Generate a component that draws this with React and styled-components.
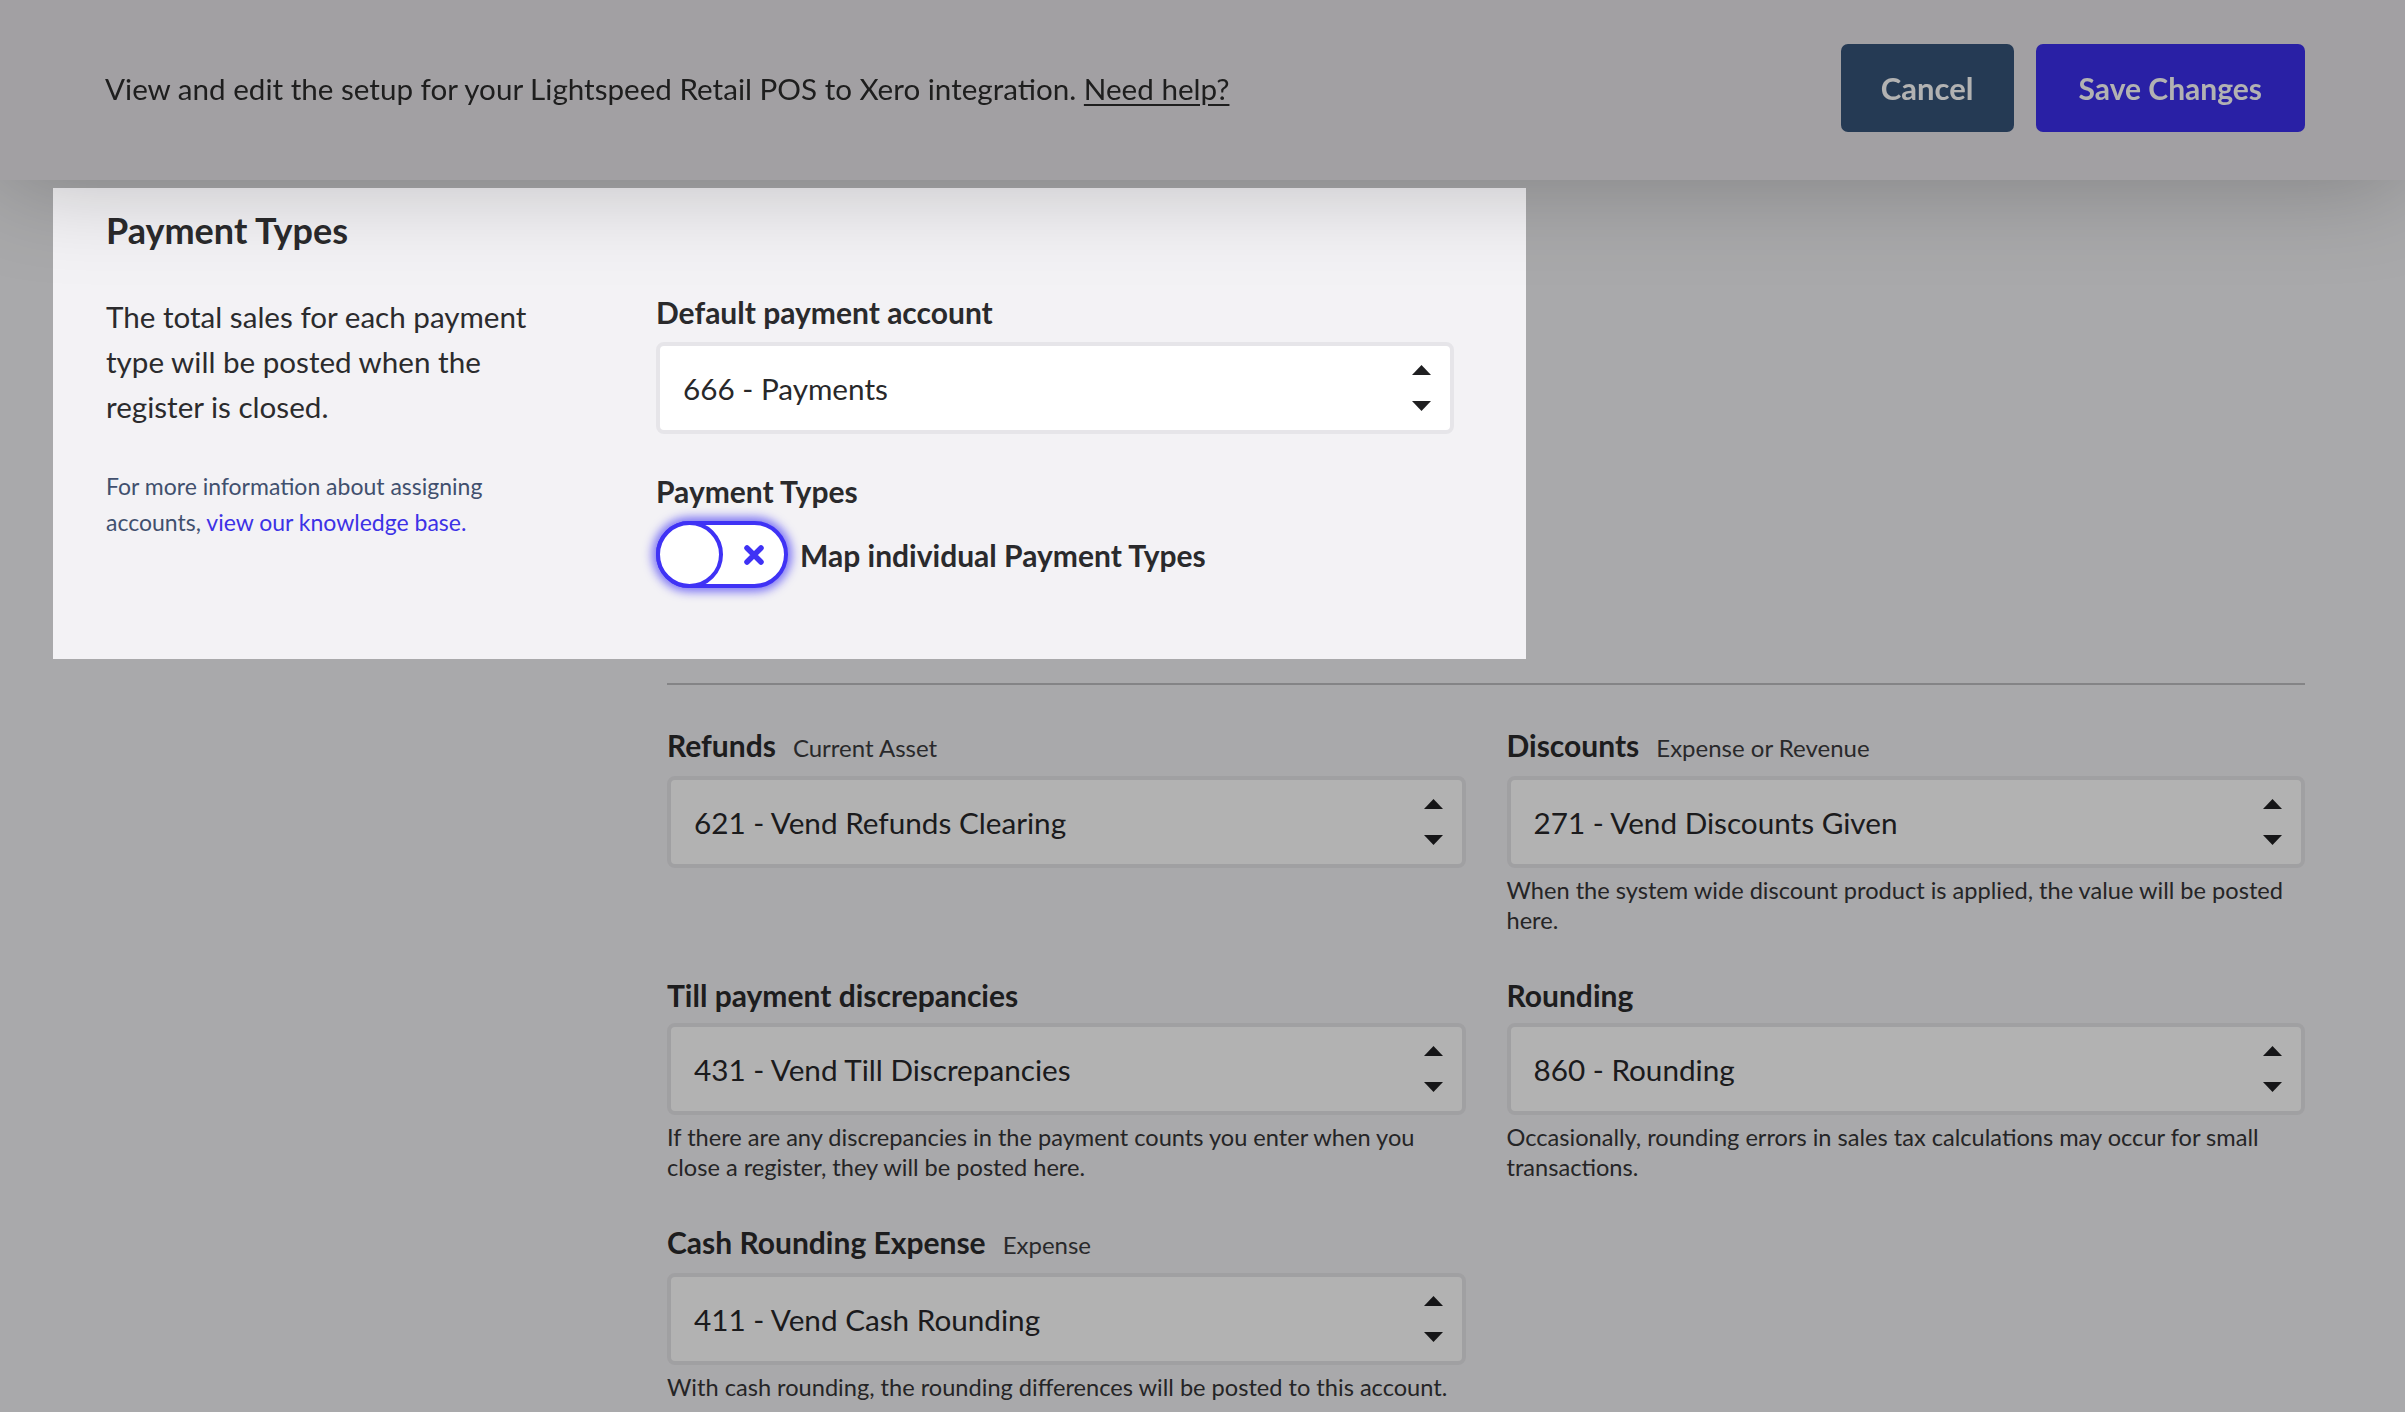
import React, { useState } from 'react';
import styled, { createGlobalStyle } from 'styled-components';

const GlobalStyle = createGlobalStyle`
  html, body {
    margin: 0;
    padding: 0;
    overflow: hidden;
    background: #f3f2f5;
  }
  body {
    font-family: Lato, "Noto Sans", sans-serif;
    color: #2b2b2d;
  }
`;

// Header
const Header = styled.header`
  position: relative;
  z-index: 3;
  height: 180px;
  box-sizing: border-box;
  padding: 0 100px 4px 105px;
  display: flex;
  align-items: center;
  justify-content: space-between;
  background: #e9e6ea;
  box-shadow: 0 0 100px rgba(0, 0, 0, 0.25);

  /* the header sits under the same dimming as the page */
  &::after {
    content: '';
    position: absolute;
    inset: 0;
    background: rgba(0, 0, 0, 0.3);
    pointer-events: none;
  }
`;

const Intro = styled.p`
  margin: 0;
  font-size: 29.6px;
  color: #2c2c2c;
`;

const HelpLink = styled.a`
  color: inherit;
  text-decoration: underline;
  text-underline-offset: 4px;
`;

const Actions = styled.div`
  display: flex;
  gap: 22px;
`;

const ActionButton = styled.button`
  height: 88px;
  padding: 0 ${(p) => (p.$primary ? '43px' : '40px')};
  border: none;
  border-radius: 7px;
  font-family: inherit;
  font-size: ${(p) => (p.$primary ? '30px' : '31px')};
  font-weight: 700;
  color: #fff;
  background: ${(p) => (p.$primary ? '#3b2eed' : '#355379')};
  cursor: pointer;
`;

// Dimmed backdrop behind the highlighted section
const Backdrop = styled.div`
  position: fixed;
  inset: 0;
  z-index: 1;
  background: rgba(0, 0, 0, 0.3);
  pointer-events: none;
`;

// Page
const Main = styled.main`
  padding: 8px 100px 0 53px;
`;

const SpotlightCard = styled.section`
  position: relative;
  z-index: 2;
  width: 1473px;
  height: 471px;
  box-sizing: border-box;
  padding: 21px 72px 0 53px;
  background: #f3f2f5;
`;

const CardTitle = styled.h2`
  margin: 0;
  font-size: 36px;
  font-weight: 700;
  line-height: 43px;
  color: #2a2a2c;
`;

const Columns = styled.div`
  display: flex;
  gap: 90px;
  margin-top: 42px;
`;

const Aside = styled.div`
  width: 460px;
  flex: none;
`;

const Description = styled.p`
  margin: 0;
  font-size: 29.6px;
  line-height: 45px;
  color: #2b2b2d;
`;

const MoreInfo = styled.p`
  margin: 39px 0 0;
  font-size: 23px;
  line-height: 36px;
  color: #41506e;
`;

const KbLink = styled.a`
  color: #3d31e6;
  text-decoration: none;
`;

const FormColumn = styled.div`
  width: 798px;
`;

const LabelRow = styled.div`
  display: flex;
  align-items: baseline;
  gap: 17px;
  margin-top: ${(p) => (p.$spaced ? '39px' : '0')};
  line-height: 36px;
`;

const Label = styled.label`
  font-size: 30px;
  font-weight: 700;
  color: #2a2a2c;
`;

const SubType = styled.span`
  font-size: 24px;
  color: #3c3c3e;
`;

const SelectBox = styled.div`
  margin-top: ${(p) => p.$gap}px;
  height: 92px;
  box-sizing: border-box;
  display: flex;
  align-items: center;
  justify-content: space-between;
  padding: 0 19px 0 23px;
  border: 4px solid #e6e5e9;
  border-radius: 8px;
  background: #fff;
  font-size: 29.7px;
  color: #28282a;
  cursor: pointer;
`;

const ToggleRow = styled.div`
  display: flex;
  align-items: center;
  gap: 12px;
  margin-top: 12px;
`;

const ToggleTrack = styled.button`
  width: 132px;
  height: 67px;
  box-sizing: border-box;
  padding: 0;
  display: flex;
  align-items: center;
  border: 4px solid #3f32f5;
  border-radius: 34px;
  background: #fff;
  box-shadow: 0 0 10px 4px rgba(63, 50, 245, 0.65);
  cursor: pointer;
`;

const ToggleKnob = styled.span`
  width: 67px;
  height: 67px;
  margin: -4px 0 -4px -4px;
  box-sizing: border-box;
  flex: none;
  border: 4px solid #3f32f5;
  border-radius: 50%;
  background: #fff;
`;

const ToggleIcon = styled.span`
  flex: 1;
  display: flex;
  justify-content: center;
  align-items: center;
`;

const ToggleText = styled.span`
  font-size: 30px;
  font-weight: 700;
  color: #2a2a2c;
`;

const Accounts = styled.section`
  margin: 24px 0 0 614px;
  padding-top: 42px;
  border-top: 2px solid #bebdc0;
  display: grid;
  grid-template-columns: 1fr 1fr;
  column-gap: 41px;
  row-gap: 42px;
  align-items: start;
`;

const Help = styled.p`
  margin: 7px 0 0;
  font-size: 23.6px;
  line-height: 30px;
  color: #353537;
`;

const Arrows = () => (
  <svg width="19" height="46" viewBox="0 0 19 46" aria-hidden="true">
    <polygon points="0,10 9.5,0 19,10" fill="#1f1f21" />
    <polygon points="0,36 19,36 9.5,46" fill="#1f1f21" />
  </svg>
);

const CrossIcon = () => (
  <svg width="24" height="24" viewBox="0 0 24 24" aria-hidden="true">
    <path d="M5 5 L19 19 M19 5 L5 19" stroke="#3f32f5" strokeWidth="5.5" strokeLinecap="round" />
  </svg>
);

const AccountSelect = ({ value, gap = 10 }) => (
  <SelectBox $gap={gap}>
    <span>{value}</span>
    <Arrows />
  </SelectBox>
);

const accountFields = [
  { label: 'Refunds', type: 'Current Asset', value: '621 - Vend Refunds Clearing' },
  {
    label: 'Discounts',
    type: 'Expense or Revenue',
    value: '271 - Vend Discounts Given',
    help: 'When the system wide discount product is applied, the value will be posted here.',
  },
  {
    label: 'Till payment discrepancies',
    value: '431 - Vend Till Discrepancies',
    help: 'If there are any discrepancies in the payment counts you enter when you close a register, they will be posted here.',
  },
  {
    label: 'Rounding',
    value: '860 - Rounding',
    help: 'Occasionally, rounding errors in sales tax calculations may occur for small transactions.',
  },
  {
    label: 'Cash Rounding Expense',
    type: 'Expense',
    value: '411 - Vend Cash Rounding',
    help: 'With cash rounding, the rounding differences will be posted to this account.',
  },
];

const App = () => {
  const [mapIndividual, setMapIndividual] = useState(false);

  return (
    <>
      <GlobalStyle />
      <Header>
        <Intro>
          View and edit the setup for your Lightspeed Retail POS to Xero integration.{' '}
          <HelpLink href="#">Need help?</HelpLink>
        </Intro>
        <Actions>
          <ActionButton>Cancel</ActionButton>
          <ActionButton $primary>Save Changes</ActionButton>
        </Actions>
      </Header>

      <Backdrop />

      <Main>
        <SpotlightCard>
          <CardTitle>Payment Types</CardTitle>
          <Columns>
            <Aside>
              <Description>
                The total sales for each payment type will be posted when the register is closed.
              </Description>
              <MoreInfo>
                For more information about assigning accounts,{' '}
                <KbLink href="#">view our knowledge base.</KbLink>
              </MoreInfo>
            </Aside>
            <FormColumn>
              <LabelRow>
                <Label>Default payment account</Label>
              </LabelRow>
              <AccountSelect value="666 - Payments" gap={12} />

              <LabelRow $spaced>
                <Label>Payment Types</Label>
              </LabelRow>
              <ToggleRow>
                <ToggleTrack onClick={() => setMapIndividual(!mapIndividual)} aria-pressed={mapIndividual}>
                  <ToggleKnob />
                  <ToggleIcon>
                    <CrossIcon />
                  </ToggleIcon>
                </ToggleTrack>
                <ToggleText>Map individual Payment Types</ToggleText>
              </ToggleRow>
            </FormColumn>
          </Columns>
        </SpotlightCard>

        <Accounts>
          {accountFields.map((field) => (
            <div key={field.label}>
              <LabelRow>
                <Label>{field.label}</Label>
                {field.type && <SubType>{field.type}</SubType>}
              </LabelRow>
              <AccountSelect value={field.value} />
              {field.help && <Help>{field.help}</Help>}
            </div>
          ))}
        </Accounts>
      </Main>
    </>
  );
};

export default App;
